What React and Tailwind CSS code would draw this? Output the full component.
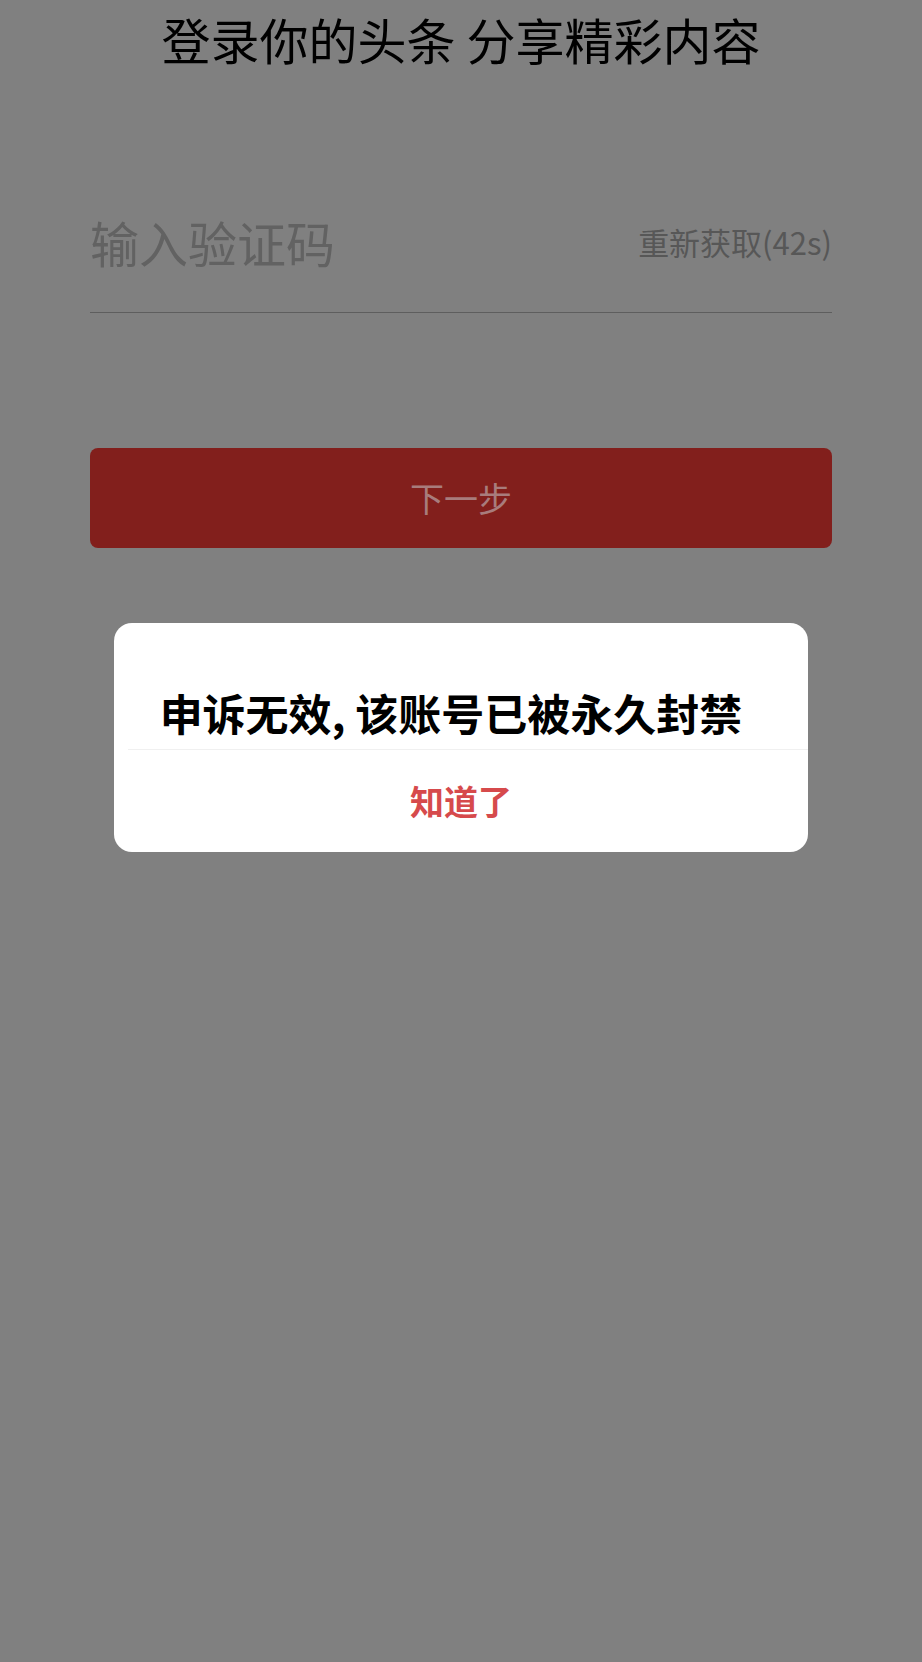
// App.jsx — 验证码登录页 + 封禁提示弹窗（遮罩下的灰色页面）
const cjk = "font-['Noto_Sans_CJK_SC','Noto_Sans',sans-serif]";

function CodeInput() {
  return (
    <div className="mx-[90px] mt-[150px] flex items-center justify-between border-b border-[#5e5e5e] pb-[46px]">
      <span className="text-[49px] leading-none text-[#626262]">输入验证码</span>
      <span className="text-[31px] leading-none text-[#575757]">重新获取(42s)</span>
    </div>
  );
}

function NextButton() {
  return (
    <button className="mx-[90px] mt-[135px] flex h-[100px] w-[742px] items-center justify-center rounded-[8px] bg-[#821f1c] text-[34px] leading-none text-[#a87c7c]">
      下一步
    </button>
  );
}

function BanDialog() {
  return (
    <div className="mx-[114px] mt-[75px] w-[694px] rounded-[18px] bg-white">
      <div className="pt-[68px] pb-[15px] pr-[20px] text-center text-[43px] font-bold leading-none text-black">
        申诉无效, 该账号已被永久封禁
      </div>
      <div className="ml-[14px] h-px bg-[#f0f0f0]" />
      <button className="flex h-[102px] w-full items-center justify-center text-[34px] font-bold leading-none text-[#d64a4c]">
        知道了
      </button>
    </div>
  );
}

export default function App() {
  return (
    <div className={`min-h-[1662px] w-[922px] bg-[#808080] ${cjk}`}>
      <h1 className="pt-[11px] text-center text-[49px] font-normal leading-[56px] text-black">
        登录你的头条 分享精彩内容
      </h1>
      <CodeInput />
      <NextButton />
      <BanDialog />
    </div>
  );
}
